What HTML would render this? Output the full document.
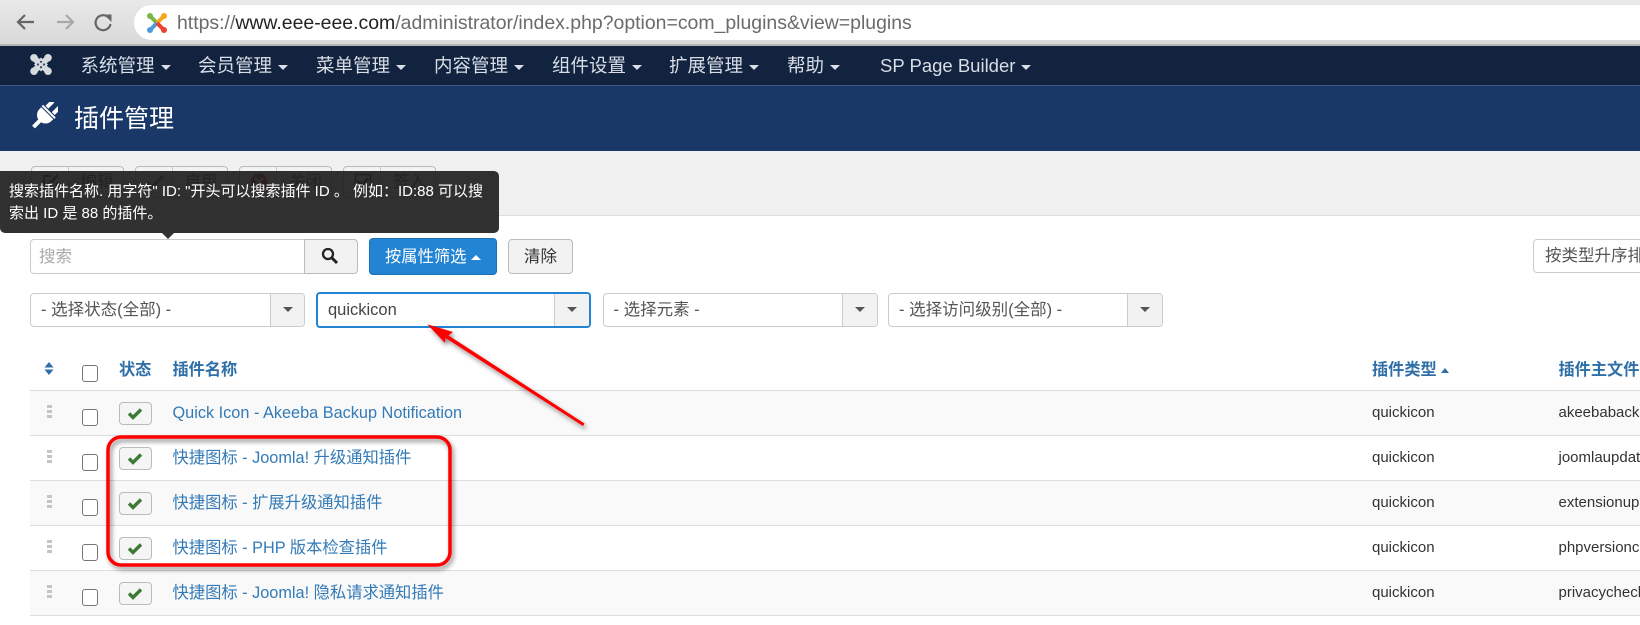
<!DOCTYPE html>
<html lang="zh-CN">
<head>
<meta charset="utf-8">
<title>插件管理</title>
<style>
*{box-sizing:border-box}
html,body{margin:0;padding:0;width:1640px;height:625px;overflow:hidden;background:#fff;font-family:"Liberation Sans","Noto Sans CJK SC",sans-serif;color:#333}
.a{position:absolute}
.t{position:absolute;white-space:nowrap}
.navt{position:absolute;top:50px;height:32px;line-height:32px;font-size:18.5px;color:#d8dde6;white-space:nowrap}
.car{display:inline-block;width:0;height:0;border-left:5px solid transparent;border-right:5px solid transparent;border-top:5px solid #d8dde6;margin-left:6px;vertical-align:middle}
.tb{position:absolute;top:166px;height:32px;border:1px solid #bbb;border-radius:4px;background:#f2f2f2;font-size:16.5px;line-height:30px;color:#333;white-space:nowrap}
.tb i{position:absolute;top:0;bottom:0;width:1px;background:#c8c8c8}
.tb span{position:absolute;top:0}
.tb svg{position:absolute;left:9px;top:5px}
.sel{position:absolute;top:293px;height:34px;border:1px solid #ccc;border-radius:4px;background:#fff;font-size:16.5px;line-height:32px;color:#555;padding-left:10px;white-space:nowrap;overflow:hidden}
.sel b{position:absolute;top:0;bottom:0;right:0;width:35px;background:#f2f2f2;border-left:1px solid #ccc}
.sel b:after{content:"";position:absolute;left:12px;top:13px;border-left:5px solid transparent;border-right:5px solid transparent;border-top:5px solid #555}
.row{position:absolute;left:30px;width:1610px;height:45px;border-bottom:1px solid #ddd}
.cb{position:absolute;width:16px;height:17px;border:1px solid #767676;border-radius:3px;background:#fff;left:51.5px}
.drag{position:absolute;left:17px;top:14px;width:5px;height:14px;background:repeating-linear-gradient(#c4c4c4 0 3px,transparent 3px 5px)}
.st{position:absolute;left:89px;top:11px;width:33px;height:23px;border:1px solid #bbb;border-radius:4px;background:#f5f5f5}
.name{position:absolute;left:142.5px;top:11px;font-size:16.3px;line-height:22px;color:#337ab7;white-space:nowrap}
.ty{position:absolute;left:1342px;top:12px;font-size:15px;line-height:20px;color:#333;white-space:nowrap}
.fi{position:absolute;left:1528.5px;top:12px;font-size:15px;line-height:20px;color:#333;white-space:nowrap}
.th{position:absolute;top:359px;font-size:16.2px;line-height:22px;font-weight:bold;color:#2f6fa7;white-space:nowrap}
</style>
</head>
<body>

<!-- browser bar -->
<div class="a" style="left:0;top:0;width:1640px;height:46px;background:linear-gradient(#e9e9e9,#d9d9d9);border-bottom:2px solid #b4b4b4"></div>
<svg class="a" style="left:14px;top:8px" width="110" height="30" viewBox="0 0 110 30" fill="none">
<path d="M20 14H5M11 7l-7 7 7 7" stroke="#666" stroke-width="2.2"/>
<path d="M43 14h15M52 7l7 7-7 7" stroke="#a8a8a8" stroke-width="2.2"/>
<path d="M94 9a7.5 7.5 0 1 0 2.5 7" stroke="#666" stroke-width="2.2"/>
<path d="M90 6.5h7.5V14z" fill="#666"/>
</svg>
<div class="a" style="left:134px;top:5px;width:1520px;height:35px;background:#fff;border-radius:18px 0 0 18px"></div>
<svg class="a" style="left:146px;top:12px" width="22" height="22" viewBox="0 0 22 22" fill="none" stroke-width="4">
<path d="M4 4l7 7" stroke="#7ab648"/><path d="M18 4l-7 7" stroke="#f4a81d"/><path d="M4 18l7-7" stroke="#4f9bd9"/><path d="M18 18l-7-7" stroke="#e8432e"/>
<circle cx="4" cy="4" r="3" fill="#7ab648" stroke="none"/><circle cx="18" cy="4" r="3" fill="#f4a81d" stroke="none"/><circle cx="4" cy="18" r="3" fill="#4f9bd9" stroke="none"/><circle cx="18" cy="18" r="3" fill="#e8432e" stroke="none"/>
</svg>
<div class="t" style="left:177px;top:10px;font-size:19.45px;line-height:26px;color:#6b6b6b">https://<span style="color:#222">www.eee-eee.com</span>/administrator/index.php?option=com_plugins&amp;view=plugins</div>

<!-- nav -->
<div class="a" style="left:0;top:46px;width:1640px;height:39px;background:#11233f"></div>
<svg class="a" style="left:30px;top:54px" width="22" height="21" viewBox="0 0 22 21" fill="none">
<path d="M4 4L18 17M18 4L4 17" stroke="#d6d9de" stroke-width="6"/>
<path d="M11 3.500L18 10.500L11 17.500L4 10.500Z" fill="#d6d9de"/>
<circle cx="11" cy="7.800" r="1.100" fill="#3a4a63"/><circle cx="11" cy="13.200" r="1.100" fill="#3a4a63"/><circle cx="8" cy="10.500" r="1.100" fill="#3a4a63"/><circle cx="14" cy="10.500" r="1.100" fill="#3a4a63"/>
<circle cx="4" cy="3.800" r="3.800" fill="#d6d9de"/><circle cx="18" cy="3.800" r="3.800" fill="#d6d9de"/><circle cx="4" cy="17.200" r="3.800" fill="#d6d9de"/><circle cx="18" cy="17.200" r="3.800" fill="#d6d9de"/>
</svg>
<div class="navt" style="left:80.5px">系统管理<span class="car"></span></div>
<div class="navt" style="left:198px">会员管理<span class="car"></span></div>
<div class="navt" style="left:316px">菜单管理<span class="car"></span></div>
<div class="navt" style="left:434px">内容管理<span class="car"></span></div>
<div class="navt" style="left:552px">组件设置<span class="car"></span></div>
<div class="navt" style="left:669px">扩展管理<span class="car"></span></div>
<div class="navt" style="left:787px">帮助<span class="car"></span></div>
<div class="navt" style="left:880px">SP Page Builder<span class="car"></span></div>

<!-- header -->
<div class="a" style="left:0;top:85px;width:1640px;height:66px;background:#1a3867;border-top:1px solid #3a5a8c"></div>
<svg class="a" style="left:30px;top:102px" width="28" height="28" viewBox="0 0 28 28" fill="#fff">
<g transform="translate(15.500,13) rotate(45)">
<rect x="-6.500" y="-15" width="4" height="8.500"/><rect x="2.500" y="-15" width="4" height="8.500"/>
<rect x="-9" y="-5.500" width="18" height="2"/>
<path d="M-8.500 -2.500H8.500V0A8.500 8.500 0 0 1 -8.500 0Z"/>
<rect x="-2" y="7" width="4" height="10"/>
</g>
</svg>
<div class="t" style="left:74px;top:101px;font-size:25px;line-height:36px;color:#fff">插件管理</div>

<!-- toolbar -->
<div class="a" style="left:0;top:151px;width:1640px;height:65px;background:#f0f0f0;border-bottom:1px solid #ddd"></div>
<div class="tb" style="left:30.500px;width:93px"><svg width="20" height="20" viewBox="0 0 20 20" fill="none"><path d="M16 10v7H3V4h7" stroke="#1a3867" stroke-width="2"/><path d="M8 12l1-3 7-7 2 2-7 7z" fill="#1a3867"/></svg><i style="left:36px"></i><span style="left:49px">编辑</span></div>
<div class="tb" style="left:134.500px;width:93px"><svg width="20" height="20" viewBox="0 0 20 20" fill="none"><path d="M2 10l5 5L18 4" stroke="#2f7a2f" stroke-width="3.500"/></svg><i style="left:36px"></i><span style="left:49px">启用</span></div>
<div class="tb" style="left:239px;width:93px"><svg width="20" height="20" viewBox="0 0 20 20" fill="none"><circle cx="10" cy="10" r="8.500" fill="#b02020"/><path d="M6 6l8 8M14 6l-8 8" stroke="#fff" stroke-width="2.200"/></svg><i style="left:36px"></i><span style="left:49px">关闭</span></div>
<div class="tb" style="left:343px;width:93px"><svg width="20" height="20" viewBox="0 0 20 20" fill="none"><path d="M2.500 2.500h15v15h-15z" stroke="#222" stroke-width="1.600"/><path d="M5 9l4 4 6-7" stroke="#222" stroke-width="2.600"/></svg><i style="left:36px"></i><span style="left:49px">签入</span></div>

<!-- tooltip -->
<div class="a" style="left:0;top:171px;width:499px;height:62px;background:rgba(33,33,33,.93);border-radius:0 5px 5px 5px;color:#fff;font-size:15px;line-height:22px;padding:10px 0 0 9px;white-space:nowrap">搜索插件名称. 用字符" ID: "开头可以搜索插件 ID 。 例如：ID:88 可以搜<br>索出 ID 是 88 的插件。</div>
<div class="a" style="left:162px;top:233px;border-left:6px solid transparent;border-right:6px solid transparent;border-top:6px solid #333"></div>

<!-- search -->
<div class="a" style="left:30px;top:239px;width:275px;height:35px;border:1px solid #ccc;border-radius:4px 0 0 4px;background:#fff;font-size:16.500px;line-height:35px;color:#aaa;padding-left:8px">搜索</div>
<div class="a" style="left:304px;top:239px;width:54px;height:35px;border:1px solid #bbb;border-radius:0 4px 4px 0;background:#f2f2f2"></div>
<svg class="a" style="left:321px;top:247px" width="18" height="18" viewBox="0 0 18 18" fill="none" stroke="#222">
<circle cx="7" cy="7" r="5" stroke-width="2.300"/><path d="M11 11l5 5" stroke-width="3"/>
</svg>
<div class="a" style="left:369px;top:238px;width:128px;height:37px;background:#2384d3;border:1px solid #1a6fb5;border-radius:4px;color:#fff;font-size:16.300px;line-height:37px;padding-left:15px;white-space:nowrap">按属性筛选<span style="display:inline-block;margin-left:5px;vertical-align:middle;border-left:5px solid transparent;border-right:5px solid transparent;border-bottom:5px solid #fff"></span></div>
<div class="a" style="left:508px;top:239px;width:65px;height:35px;background:#f2f2f2;border:1px solid #bbb;border-radius:4px;font-size:16.500px;line-height:35px;text-align:center;color:#333">清除</div>
<div class="a" style="left:1533px;top:239px;width:120px;height:34px;background:#fff;border:1px solid #ccc;border-radius:4px;font-size:16.500px;line-height:32px;padding-left:11px;color:#555;white-space:nowrap;overflow:hidden">按类型升序排列</div>

<!-- selects -->
<div class="sel" style="left:30px;width:275px">- 选择状态(全部) -<b style="width:34px"></b></div>
<div class="sel" style="left:316px;top:292px;width:275px;height:36px;border:2px solid #2384d3;color:#444">quickicon<b></b></div>
<div class="sel" style="left:602.500px;width:275px">- 选择元素 -<b></b></div>
<div class="sel" style="left:888px;width:275px">- 选择访问级别(全部) -<b></b></div>

<!-- table head -->
<div class="a" style="left:30px;top:390px;width:1610px;height:1px;background:#ddd"></div>
<svg class="a" style="left:44px;top:362px" width="10" height="14" viewBox="0 0 10 14"><path d="M5 0l4.500 5.500H.5zM5 13L.5 7.500h9z" fill="#2f6fa7"/></svg>
<div class="cb" style="left:81.500px;top:365px"></div>
<div class="th" style="left:119px">状态</div>
<div class="th" style="left:172.500px">插件名称</div>
<div class="th" style="left:1372px">插件类型<span style="display:inline-block;margin-left:4px;vertical-align:middle;border-left:4.500px solid transparent;border-right:4.500px solid transparent;border-bottom:5px solid #2f6fa7"></span></div>
<div class="th" style="left:1558.500px">插件主文件</div>

<!-- rows -->
<div class="row" style="top:391px;background:#f9f9f9"><div class="drag"></div><div class="cb" style="top:18px"></div><div class="st"><svg width="31" height="21" viewBox="0 0 31 21"><path d="M9 10.500l4 4 8-8" fill="none" stroke="#3c7a36" stroke-width="3.400"/></svg></div><div class="name">Quick Icon - Akeeba Backup Notification</div><div class="ty">quickicon</div><div class="fi">akeebabackup</div></div>
<div class="row" style="top:436px;background:#fff"><div class="drag"></div><div class="cb" style="top:18px"></div><div class="st"><svg width="31" height="21" viewBox="0 0 31 21"><path d="M9 10.500l4 4 8-8" fill="none" stroke="#3c7a36" stroke-width="3.400"/></svg></div><div class="name">快捷图标 - Joomla! 升级通知插件</div><div class="ty">quickicon</div><div class="fi">joomlaupdate</div></div>
<div class="row" style="top:481px;background:#f9f9f9"><div class="drag"></div><div class="cb" style="top:18px"></div><div class="st"><svg width="31" height="21" viewBox="0 0 31 21"><path d="M9 10.500l4 4 8-8" fill="none" stroke="#3c7a36" stroke-width="3.400"/></svg></div><div class="name">快捷图标 - 扩展升级通知插件</div><div class="ty">quickicon</div><div class="fi">extensionupdate</div></div>
<div class="row" style="top:526px;background:#fff"><div class="drag"></div><div class="cb" style="top:18px"></div><div class="st"><svg width="31" height="21" viewBox="0 0 31 21"><path d="M9 10.500l4 4 8-8" fill="none" stroke="#3c7a36" stroke-width="3.400"/></svg></div><div class="name">快捷图标 - PHP 版本检查插件</div><div class="ty">quickicon</div><div class="fi">phpversioncheck</div></div>
<div class="row" style="top:571px;background:#f9f9f9"><div class="drag"></div><div class="cb" style="top:18px"></div><div class="st"><svg width="31" height="21" viewBox="0 0 31 21"><path d="M9 10.500l4 4 8-8" fill="none" stroke="#3c7a36" stroke-width="3.400"/></svg></div><div class="name">快捷图标 - Joomla! 隐私请求通知插件</div><div class="ty">quickicon</div><div class="fi">privacycheck</div></div>

<!-- annotations -->
<svg class="a" style="left:0;top:0" width="1640" height="625" viewBox="0 0 1640 625" fill="none">
<defs><filter id="sh" x="-10%" y="-10%" width="125%" height="125%"><feDropShadow dx="2" dy="3" stdDeviation="2.500" flood-color="#000" flood-opacity=".45"/></filter></defs>
<rect x="108" y="437" width="342" height="128" rx="13" stroke="#f00" stroke-width="3.500" filter="url(#sh)"/>
<path filter="url(#sh)" d="M427.300 324.300L453 332L448.500 335.500L584.500 423.500L583 426L445.500 338L445 343Z" fill="#f00"/>
</svg>
</body>
</html>
